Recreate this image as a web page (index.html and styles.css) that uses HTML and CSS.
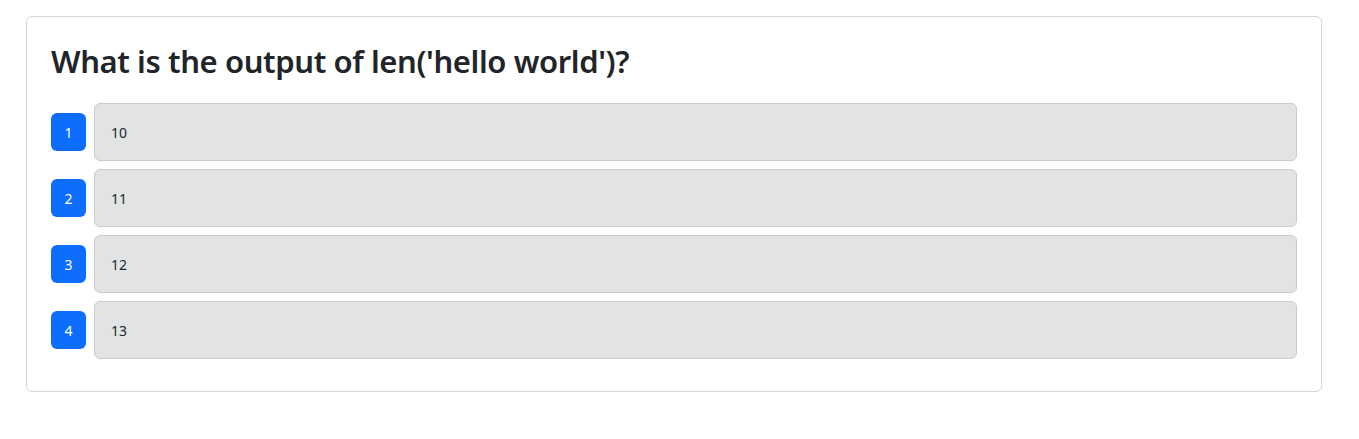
FILE: index.html
```html
<!DOCTYPE html>
<html lang="en">
<head>
<meta charset="utf-8">
<title>Quiz</title>
<link rel="stylesheet" href="styles.css">
</head>
<body>
<div class="page">
  <div class="card">
    <h3 class="question">What is the output of len('hello world')?</h3>
    <div class="options">
      <div class="option">
        <span class="badge">1</span>
        <div class="answer">10</div>
      </div>
      <div class="option">
        <span class="badge">2</span>
        <div class="answer">11</div>
      </div>
      <div class="option">
        <span class="badge">3</span>
        <div class="answer">12</div>
      </div>
      <div class="option">
        <span class="badge">4</span>
        <div class="answer">13</div>
      </div>
    </div>
  </div>
</div>
</body>
</html>
```
FILE: styles.css
```css
* { box-sizing: border-box; }
html, body { margin: 0; padding: 0; background: #fff; }
body {
  font-family: "Noto Sans", "Open Sans", "DejaVu Sans", sans-serif;
  color: #212529;
  font-size: 16px;
}
.page {
  padding: 16px 37px 0 26px;
}
.card {
  border: 1px solid #d5d6d7;
  border-radius: 6px;
  padding: 24px;
  background: #fff;
}
.question {
  margin: 2px 0 23px;
  font-size: 31px;
  font-weight: 600;
  letter-spacing: -0.4px;
  line-height: 37px;
  color: #212529;
}
.options {
  display: flex;
  flex-direction: column;
  gap: 8px;
  margin-bottom: 8px;
}
.option {
  display: flex;
  align-items: center;
  gap: 8px;
}
.badge {
  flex: none;
  width: 35px;
  height: 38px;
  border-radius: 6px;
  background: #0d6efd;
  color: #fff;
  font-size: 14px;
  display: flex;
  align-items: center;
  justify-content: center;
}
.answer {
  flex: 1;
  height: 58px;
  display: flex;
  align-items: center;
  padding: 0 16px;
  background: #e2e3e5;
  border: 1px solid #c9cbce;
  border-radius: 6px;
  font-size: 14px;
  color: #23272b;
}
```
